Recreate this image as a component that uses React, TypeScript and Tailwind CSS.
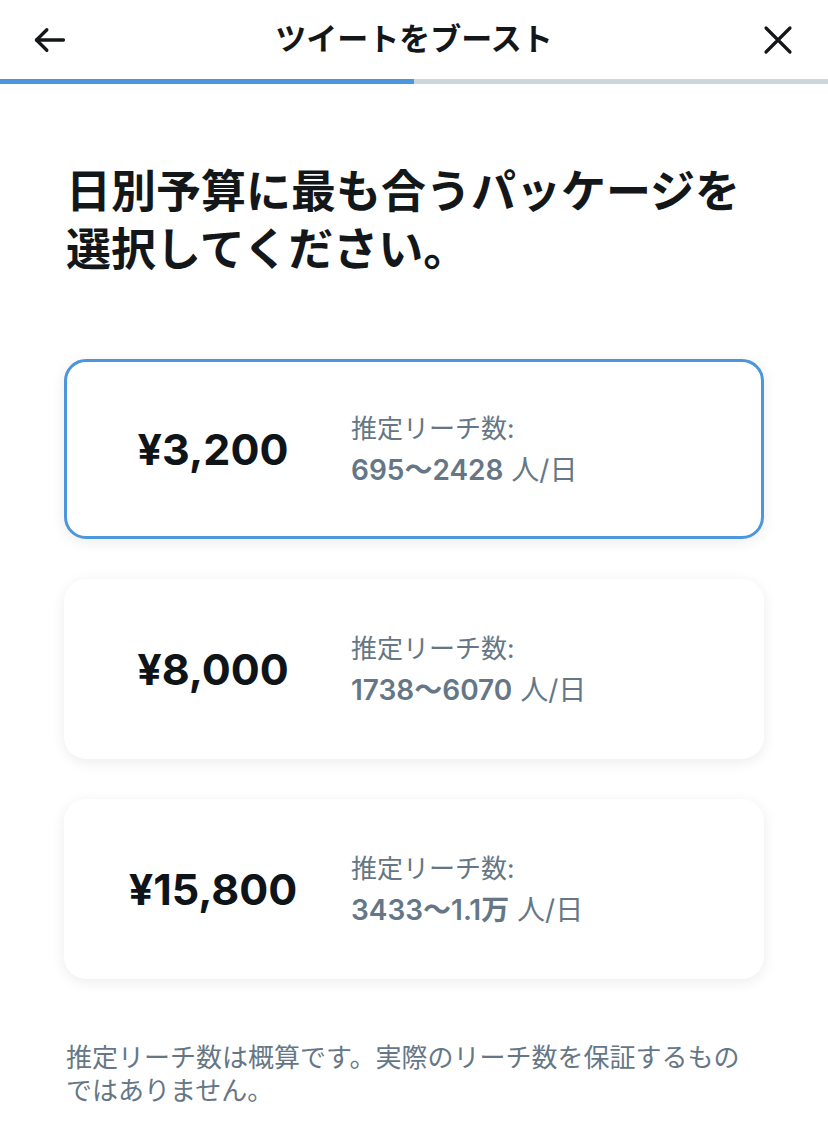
import React from 'react';

interface Pkg {
  price: string;
  range: string;
  selected?: boolean;
}

const packages: Pkg[] = [
  { price: '¥3,200', range: '695〜2428', selected: true },
  { price: '¥8,000', range: '1738〜6070' },
  { price: '¥15,800', range: '3433〜1.1万' },
];

const font = "font-['Inter','Noto_Sans_CJK_JP',sans-serif]";

const PackageCard: React.FC<{ pkg: Pkg }> = ({ pkg }) => (
  <div
    className={`h-[180px] rounded-[22px] bg-white flex items-center shadow-[0_3px_14px_rgba(0,0,0,0.08)] ${
      pkg.selected ? 'border-[3px] border-[#4c97dc]' : 'border-[3px] border-transparent'
    }`}
  >
    <div className="w-[284px] pl-2 text-center text-[43px] font-bold text-[#0f1419]">
      {pkg.price}
    </div>
    <div className="flex flex-col text-[#657786]">
      <span className="text-[26px] leading-[42px]">推定リーチ数:</span>
      <span className="text-[28px] leading-[40px]">
        <span className="font-semibold">{pkg.range}</span> 人/日
      </span>
    </div>
  </div>
);

export default function App() {
  return (
    <div className={`w-[828px] min-h-[1147px] bg-white ${font}`}>
      {/* header */}
      <div className="h-[79px] flex items-center justify-between px-[30px]">
        <button className="w-[40px] h-[40px] flex items-center justify-center text-[#14171a]">
          <svg width="38" height="38" viewBox="0 0 24 24" fill="none" stroke="currentColor" strokeWidth="2.1" strokeLinecap="round" strokeLinejoin="round">
            <path d="M20.5 12H3.5" />
            <path d="M10 5.5 3.5 12 10 18.5" />
          </svg>
        </button>
        <h1 className="text-[31px] font-bold text-[#14171a]">ツイートをブースト</h1>
        <button className="w-[40px] h-[40px] flex items-center justify-center text-[#14171a]">
          <svg width="32" height="32" viewBox="0 0 24 24" fill="none" stroke="currentColor" strokeWidth="2.4" strokeLinecap="round">
            <path d="M3 3l18 18M21 3 3 21" />
          </svg>
        </button>
      </div>

      {/* progress */}
      <div className="flex h-[5px]">
        <div className="w-1/2 bg-[#4c97dc]" />
        <div className="w-1/2 bg-[#ccd6dd]" />
      </div>

      <div className="px-[64px]">
        <h2 className="mt-[79px] pl-[2px] text-[45px] leading-[58px] font-bold text-[#14171a]">
          日別予算に最も合うパッケージを
          <br />
          選択してください。
        </h2>

        <div className="mt-[80px] flex flex-col gap-[40px]">
          {packages.map((p) => (
            <PackageCard key={p.price} pkg={p} />
          ))}
        </div>

        <p className="mt-[62px] pl-[2px] text-[26px] leading-[33px] text-[#657786]">
          推定リーチ数は概算です。実際のリーチ数を保証するものではありません。
        </p>
      </div>
    </div>
  );
}
